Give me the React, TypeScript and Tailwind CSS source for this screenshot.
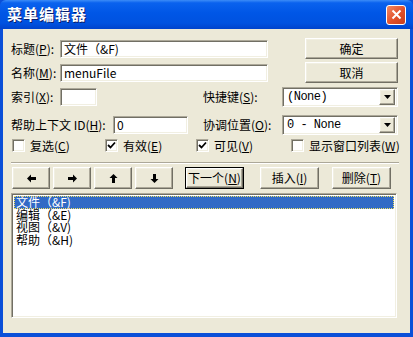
import type { ReactNode } from "react";

const sunken =
  "bg-white border border-t-[#ACA899] border-l-[#ACA899] border-r-white border-b-white shadow-[inset_1px_1px_0_#716F64,inset_-1px_-1px_0_#F1EFE2]";
const raised =
  "bg-[#ECE9D8] border border-t-white border-l-white border-r-[#716F64] border-b-[#716F64] shadow-[inset_-1px_-1px_0_#ACA899,inset_1px_1px_0_#F1EFE2] flex items-center justify-center";

function Key({ k }: { k: string }) {
  return (
    <>
      (<span className="underline">{k}</span>)
    </>
  );
}

function Combo({ value }: { value: string }) {
  return (
    <div className={`${sunken} w-[116px] h-[20px] flex items-center justify-between pl-[4px] pr-[2px]`}>
      <span className="text-[12px] leading-none font-['Liberation_Mono',monospace] tracking-[-0.5px]">{value}</span>
      <div className={`${raised} w-[16px] h-[16px]`}>
        <svg width="7" height="4" viewBox="0 0 7 4">
          <polygon points="0,0 7,0 3.5,4" fill="#000" />
        </svg>
      </div>
    </div>
  );
}

function Check({ checked, children, className }: { checked: boolean; children: ReactNode; className: string }) {
  return (
    <div className={`flex items-center gap-[5px] ${className}`}>
      <div className={`${sunken} w-[13px] h-[13px] flex items-center justify-center`}>
        {checked && (
          <svg width="9" height="9" viewBox="0 0 9 9">
            <polyline points="1,4 3.5,6.5 8,1.5" fill="none" stroke="#000" strokeWidth="1.8" />
          </svg>
        )}
      </div>
      <span>{children}</span>
    </div>
  );
}

function Arrow({ rot }: { rot: string }) {
  return (
    <div className={`${raised} w-[38px] h-[22px]`}>
      <svg width="9" height="9" viewBox="0 0 9 9" className={rot}>
        <polygon points="0,4.5 4,0.5 4,3 9,3 9,6 4,6 4,8.5" fill="#000" />
      </svg>
    </div>
  );
}

const items = ["文件（&F)", "编辑（&E)", "视图（&V)", "帮助（&H)"];

export default function App() {
  return (
    <div className="w-[413px] h-[337px] flex flex-col bg-[#0A4FD8] font-['Noto_Sans_CJK_SC',sans-serif] text-[12px] text-black select-none">
      <div className="h-[29px] flex items-center justify-between pl-[7px] pr-[7px] rounded-t-[6px] bg-[linear-gradient(180deg,#3C8CF7_0%,#0A62EE_10%,#0056E6_45%,#0052E0_80%,#0043CC_100%)]">
        <span className="text-white text-[15px] font-bold tracking-[1px] [text-shadow:1px_1px_0_#0A1E6A]">菜单编辑器</span>
        <div className="w-[20px] h-[20px] rounded-[3px] border border-white bg-[linear-gradient(135deg,#F08A65_0%,#E2502A_55%,#C93F1B_100%)] flex items-center justify-center">
          <svg width="11" height="11" viewBox="0 0 11 11">
            <path d="M1.5 1.5 L9.5 9.5 M9.5 1.5 L1.5 9.5" stroke="#fff" strokeWidth="2" />
          </svg>
        </div>
      </div>

      <div className="flex-1 mx-[3px] mb-[4px] bg-[#ECE9D8] flex flex-col pt-[9px] pl-[8px]">
        <div className="flex items-center h-[21px]">
          <span className="w-[49px]">标题<Key k="P" />:</span>
          <div className={`${sunken} w-[208px] h-[18px] flex items-center pl-[3px]`}>文件（&F)</div>
          <div className={`${raised} ml-[37px] w-[93px] h-[21px]`}>确定</div>
        </div>

        <div className="flex items-center h-[21px] mt-[3px]">
          <span className="w-[49px]">名称<Key k="M" />:</span>
          <div className={`${sunken} w-[208px] h-[18px] flex items-center pl-[3px]`}>menuFile</div>
          <div className={`${raised} ml-[37px] w-[93px] h-[21px]`}>取消</div>
        </div>

        <div className="flex items-center h-[20px] mt-[4px]">
          <span className="w-[49px]">索引<Key k="X" />:</span>
          <div className={`${sunken} w-[37px] h-[18px]`} />
          <span className="ml-[106px] w-[79px]">快捷键<Key k="S" />:</span>
          <Combo value="(None)" />
        </div>

        <div className="flex items-center h-[20px] mt-[8px]">
          <span className="w-[102px]">帮助上下文 ID<Key k="H" />:</span>
          <div className={`${sunken} w-[75px] h-[18px] flex items-center pl-[3px]`}>0</div>
          <span className="ml-[15px] w-[79px]">协调位置<Key k="O" />:</span>
          <Combo value="0 - None" />
        </div>

        <div className="flex items-center h-[17px] mt-[2px]">
          <Check checked={false} className="ml-[1px] w-[93px]">复选<Key k="C" /></Check>
          <Check checked={true} className="w-[91px]">有效<Key k="E" /></Check>
          <Check checked={true} className="w-[95px]">可见<Key k="V" /></Check>
          <Check checked={false} className="">显示窗口列表<Key k="W" /></Check>
        </div>

        <div className="mt-[8px] w-[388px] h-[2px] border-t border-t-[#ACA899] border-b border-b-white" />

        <div className="flex items-center h-[22px] mt-[3px]">
          <div className="ml-[1px] flex gap-[3px]">
            <Arrow rot="" />
            <Arrow rot="rotate-180" />
            <Arrow rot="rotate-90" />
            <Arrow rot="-rotate-90" />
          </div>
          <div className="ml-[12px] w-[59px] h-[22px] border border-black flex">
            <div className={`${raised} flex-1`}>下一个<Key k="N" /></div>
          </div>
          <div className={`${raised} ml-[16px] w-[59px] h-[22px]`}>插入<Key k="I" /></div>
          <div className={`${raised} ml-[13px] w-[59px] h-[22px]`}>删除<Key k="T" /></div>
        </div>

        <div className={`${sunken} mt-[4px] w-[386px] h-[125px] p-[2px] flex flex-col`}>
          {items.map((t, i) => (
            <div
              key={t}
              className={
                i === 0
                  ? "h-[12.5px] leading-[12.5px] pl-[2px] bg-[#316AC5] text-white outline outline-1 outline-dotted outline-[#F0E060] -outline-offset-1"
                  : "h-[12.5px] leading-[12.5px] pl-[2px]"
              }
            >
              {t}
            </div>
          ))}
        </div>
      </div>
    </div>
  );
}
